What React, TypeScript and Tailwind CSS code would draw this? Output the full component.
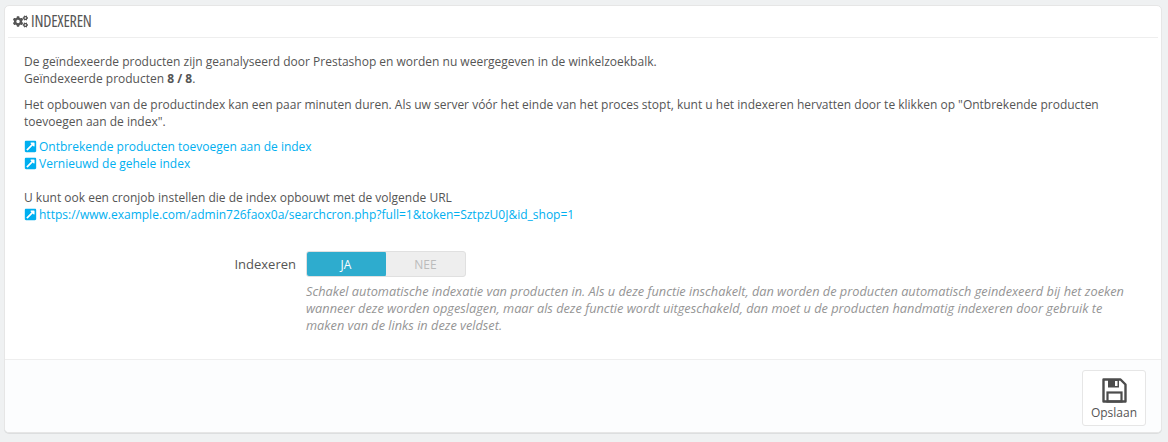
import { FaCogs, FaExternalLinkSquareAlt } from "react-icons/fa";

const FONT = { fontFamily: '"Open Sans", sans-serif' };

const SaveIcon = () => (
  <svg viewBox="0 0 25 25" className="w-[25px] h-[25px]">
    <path d="M1.5 1.5h17l5 5v17h-22z" fill="none" stroke="#4c4c4c" strokeWidth="2.4" strokeLinejoin="round" />
    <rect x="6" y="1.5" width="11" height="8" fill="#4c4c4c" />
    <rect x="13" y="3" width="2.5" height="5" fill="#fff" />
    <rect x="5.5" y="14.5" width="14" height="9" fill="none" stroke="#4c4c4c" strokeWidth="2.2" />
  </svg>
);

const LinkRow = ({ text }: { text: string }) => (
  <div>
    <a href="#" className="text-[#00aff0]">
      <FaExternalLinkSquareAlt className="w-[13px] h-[13px] mr-[2px] inline-block align-[-2px]" />
      {text}
    </a>
  </div>
);

export default function App() {
  return (
    <div style={FONT} className="w-[1168px] h-[442px] bg-[#eff1f2] pt-[5px] px-1 text-xs leading-[17px] text-[#555]">
      <div className="w-[1158px] h-[428px] bg-white rounded-[5px] border border-[#e6e6e6] shadow-[0_1px_0_rgba(0,0,0,0.08)] flex flex-col overflow-hidden">
        <div className="mx-[3px] pl-[5px] h-[32px] border-b border-[#eee] flex items-center">
          <FaCogs className="w-[15px] h-[15px] mr-[3px] text-[#555]" />
          <span className="text-[16px] text-[#555] [font-stretch:75%] -tracking-[0.2px]">INDEXEREN</span>
        </div>

        <div className="flex-1 pl-[19px] pr-5 pt-[15px]">
          <p>
            De geïndexeerde producten zijn geanalyseerd door Prestashop en worden nu weergegeven in de winkelzoekbalk.
            <br />
            Geïndexeerde producten <b>8 / 8</b>.
          </p>
          <p className="mt-[9px]">
            Het opbouwen van de productindex kan een paar minuten duren. Als uw server vóór het einde van het proces stopt, kunt u het indexeren hervatten door te klikken op "Ontbrekende producten toevoegen aan de index".
          </p>
          <div className="mt-[8px]">
            <LinkRow text="Ontbrekende producten toevoegen aan de index" />
            <LinkRow text="Vernieuwd de gehele index" />
          </div>
          <p className="mt-[17px]">U kunt ook een cronjob instellen die de index opbouwt met de volgende URL</p>
          <LinkRow text="https://www.example.com/admin726faox0a/searchcron.php?full=1&token=SztpzU0J&id_shop=1" />

          <div className="flex mt-[28px]">
            <label className="w-[282px] pr-[10px] text-right text-[13px] leading-[26px]">Indexeren</label>
            <div className="w-[825px]">
              <div className="flex w-[160px] h-[26px] rounded-[3px] overflow-hidden border border-[#e0e0e0] bg-[#eee]">
                <span className="w-[80px] -m-px bg-[#2eacce] text-white text-center leading-[28px] rounded-[3px]">JA</span>
                <span className="flex-1 text-[#bbb] text-center leading-[26px] ml-px">NEE</span>
              </div>
              <p className="mt-[6px] italic text-[12.75px] text-[#959595]">
                Schakel automatische indexatie van producten in. Als u deze functie inschakelt, dan worden de producten automatisch geindexeerd bij het zoeken wanneer deze worden opgeslagen, maar als deze functie wordt uitgeschakeld, dan moet u de producten handmatig indexeren door gebruik te maken van de links in deze veldset.
              </p>
            </div>
          </div>
        </div>

        <div className="h-[73px] bg-[#fcfdfe] border-t border-[#eee] flex justify-end pt-[10px] pr-[15px]">
          <button className="w-[64px] h-[56px] bg-white border border-[#e6e6e6] rounded-[3px] flex flex-col items-center pt-[7px] text-[#555] leading-[17px]">
            <SaveIcon />
            <span className="mt-[1px]">Opslaan</span>
          </button>
        </div>
      </div>
    </div>
  );
}
